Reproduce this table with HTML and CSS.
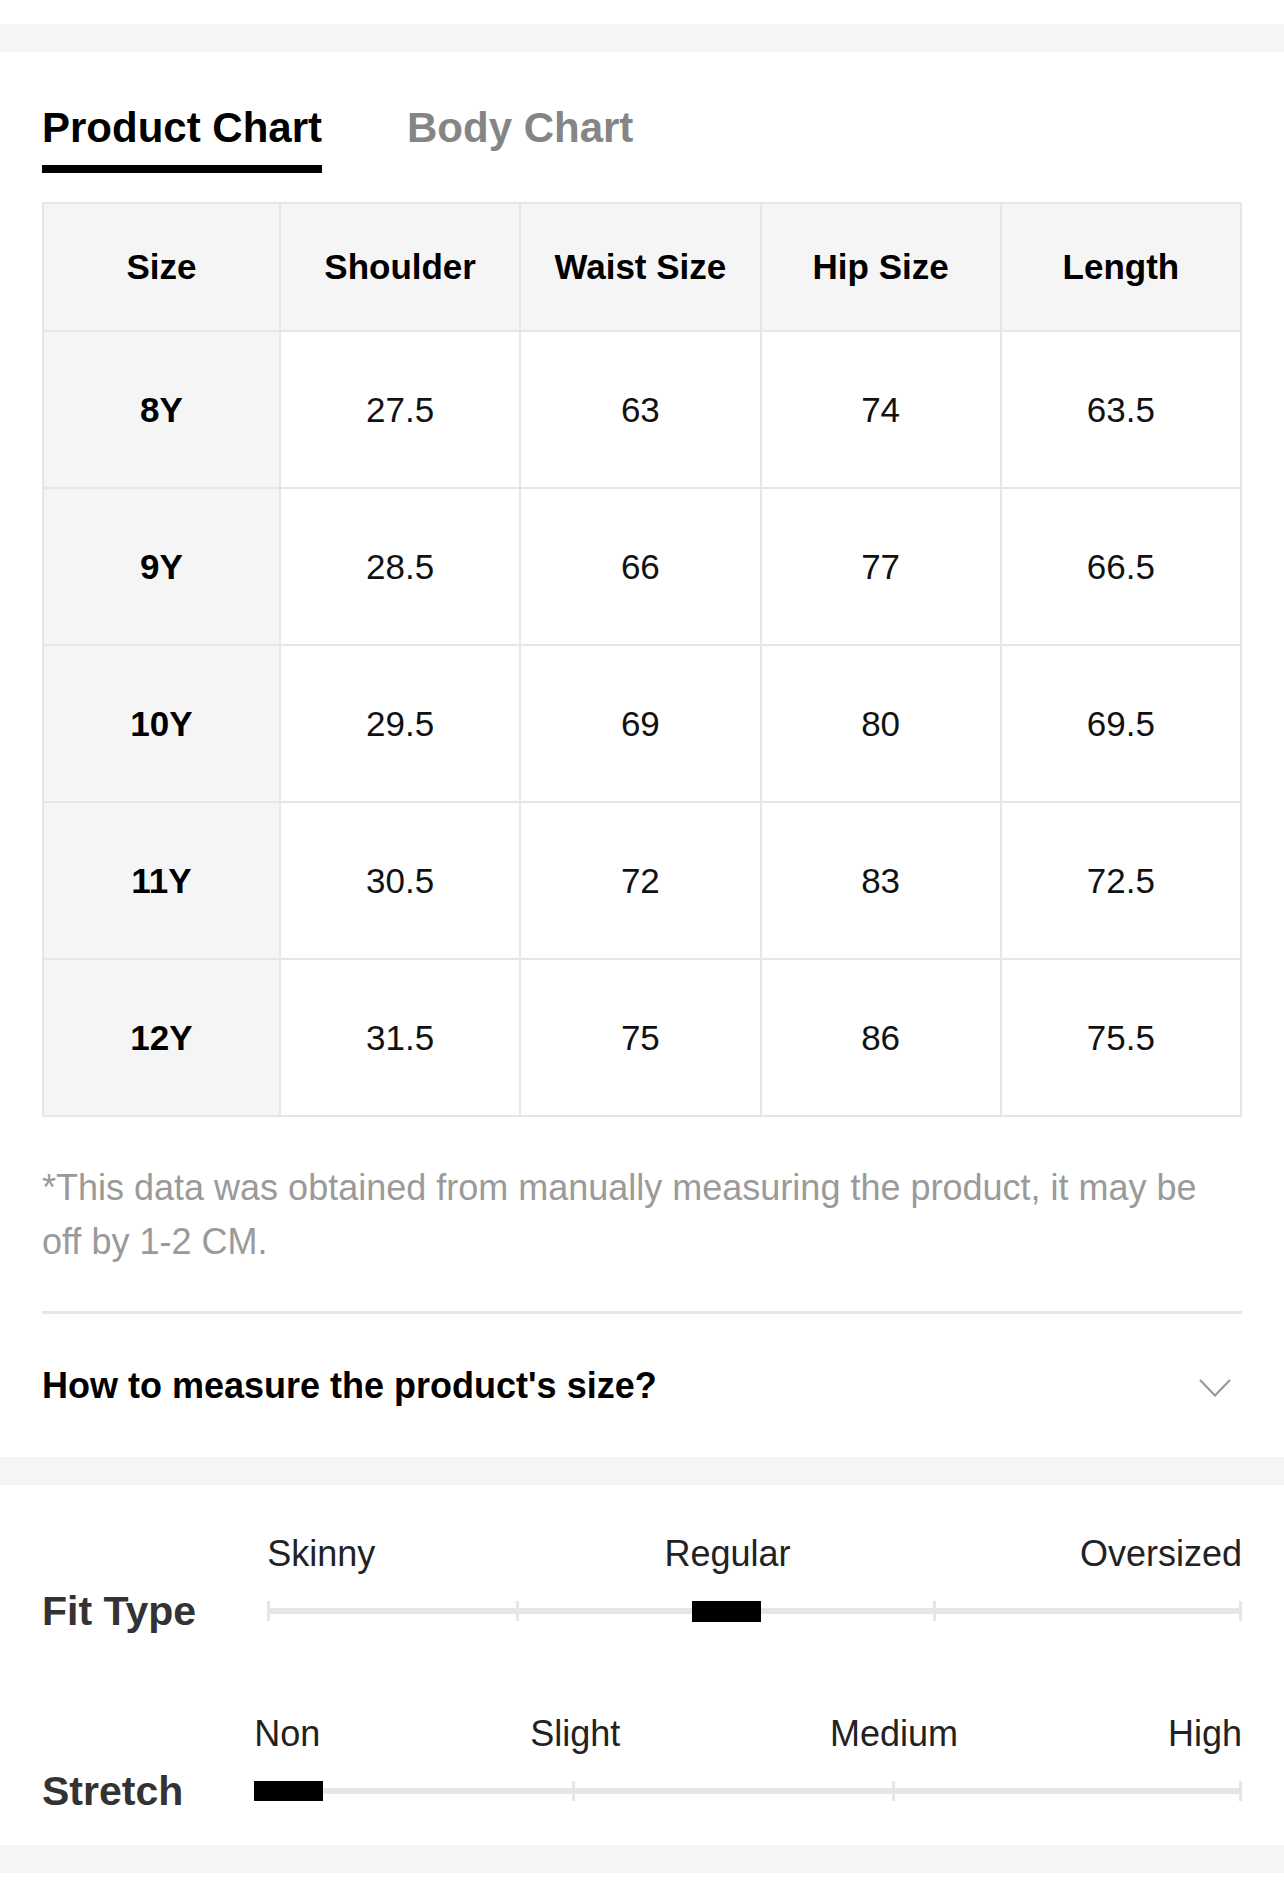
FILE: index.html
```html
<!DOCTYPE html>
<html lang="en">
<head>
<meta charset="utf-8">
<title>Size Chart</title>
<link rel="stylesheet" href="styles.css">
</head>
<body>
<div class="top-gap"></div>
<div class="band"></div>
<section class="chart">
  <div class="tabs">
    <div class="tab active">Product Chart</div>
    <div class="tab">Body Chart</div>
  </div>
  <table class="size-table">
    <colgroup><col class="col-size"><col><col><col><col></colgroup>
    <thead>
      <tr><th>Size</th><th>Shoulder</th><th>Waist Size</th><th>Hip Size</th><th>Length</th></tr>
    </thead>
    <tbody>
      <tr><th>8Y</th><td>27.5</td><td>63</td><td>74</td><td>63.5</td></tr>
      <tr><th>9Y</th><td>28.5</td><td>66</td><td>77</td><td>66.5</td></tr>
      <tr><th>10Y</th><td>29.5</td><td>69</td><td>80</td><td>69.5</td></tr>
      <tr><th>11Y</th><td>30.5</td><td>72</td><td>83</td><td>72.5</td></tr>
      <tr><th>12Y</th><td>31.5</td><td>75</td><td>86</td><td>75.5</td></tr>
    </tbody>
  </table>
  <p class="note">*This data was obtained from manually measuring the product, it may be off by 1-2 CM.</p>
  <div class="divider"></div>
  <div class="measure">
    <span class="measure-title">How to measure the product's size?</span>
    <svg class="chevron" width="32" height="18" viewBox="0 0 32 18"><path d="M1 1 L16 16.5 L31 1" fill="none" stroke="#999" stroke-width="2.2"/></svg>
  </div>
</section>
<div class="band"></div>
<section class="fit">
  <div class="scale-row">
    <div class="scale-label">Fit Type</div>
    <div class="scale">
      <div class="scale-names"><span>Skinny</span><span>Regular</span><span>Oversized</span></div>
      <div class="bar">
        <div class="track"></div>
        <span class="tick tick-start"></span>
        <span class="tick fit-t1"></span>
        <span class="tick fit-t2"></span>
        <span class="tick tick-end"></span>
        <span class="marker fit-marker"></span>
      </div>
    </div>
  </div>
  <div class="scale-row stretch-row">
    <div class="scale-label">Stretch</div>
    <div class="scale">
      <div class="scale-names"><span>Non</span><span>Slight</span><span>Medium</span><span>High</span></div>
      <div class="bar">
        <div class="track"></div>
        <span class="tick st-t1"></span>
        <span class="tick st-t2"></span>
        <span class="tick tick-end"></span>
        <span class="marker st-marker"></span>
      </div>
    </div>
  </div>
</section>
<div class="band"></div>
</body>
</html>
```
FILE: styles.css
```css
html, body {
  margin: 0;
  padding: 0;
  background: #fff;
  font-family: "Liberation Sans", Arial, Helvetica, sans-serif;
  color: #111;
}
.top-gap { height: 24px; }
.band { height: 28px; background: #f5f5f5; }

.chart { padding: 52px 42px 0; }

.tabs { display: flex; gap: 85px; }
.tab {
  font-size: 42px;
  font-weight: bold;
  line-height: 48px;
  color: #858585;
  padding-bottom: 13px;
}
.tab.active {
  color: #000;
  border-bottom: 8px solid #000;
}

.size-table {
  margin-top: 29px;
  width: 100%;
  border-collapse: collapse;
  table-layout: fixed;
  font-size: 35px;
}
.col-size { width: 237px; }
.size-table th,
.size-table td {
  border: 2px solid #e6e6e6;
  text-align: center;
  vertical-align: middle;
  padding: 0;
  color: #000;
}
.size-table thead th {
  height: 126px;
  background: #f5f5f5;
  font-weight: bold;
}
.size-table tbody th,
.size-table tbody td {
  height: 155px;
}
.size-table tbody th {
  background: #f5f5f5;
  font-weight: bold;
}
.size-table td { font-weight: normal; color: #111; }

.note {
  margin: 44px 0 0;
  font-size: 36px;
  line-height: 54px;
  color: #9a9a9a;
}
.divider {
  margin-top: 42px;
  height: 3px;
  background: #e6e6e6;
}
.measure {
  height: 143px;
  display: flex;
  align-items: center;
  justify-content: space-between;
}
.measure-title {
  font-size: 36px;
  font-weight: bold;
  color: #000;
}
.chevron { margin-right: 11px; margin-top: 4px; }

.fit { padding: 49px 42px 34px; }
.scale-row { display: flex; align-items: flex-end; }
.stretch-row { margin-top: 83px; }
.scale-label {
  font-size: 41px;
  font-weight: bold;
  line-height: 40px;
  height: 40px;
  color: #333;
  margin-right: 71px;
  white-space: nowrap;
}
.scale { flex: 1; }
.scale-names {
  display: flex;
  justify-content: space-between;
  font-size: 36px;
  line-height: 40px;
  color: #222;
}
.bar {
  position: relative;
  box-sizing: border-box;
  height: 40px;
  margin-top: 17px;
  padding-top: 17px;
}
.track {
  height: 6px;
  background: #e6e6e6;
}
.tick {
  position: absolute;
  top: 10px;
  width: 3px;
  height: 20px;
  background: #e6e6e6;
}
.tick-start { left: 0; }
.tick-end { right: 0; }
.fit-t1 { left: 25.5%; }
.fit-t2 { left: 68.3%; }
.st-t1 { left: 32.2%; }
.st-t2 { left: 64.6%; }
.marker {
  position: absolute;
  top: 10px;
  height: 21px;
  width: 69px;
  background: #000;
}
.fit-marker { left: 43.6%; }
.st-marker { left: 0; height: 20px; }
```
